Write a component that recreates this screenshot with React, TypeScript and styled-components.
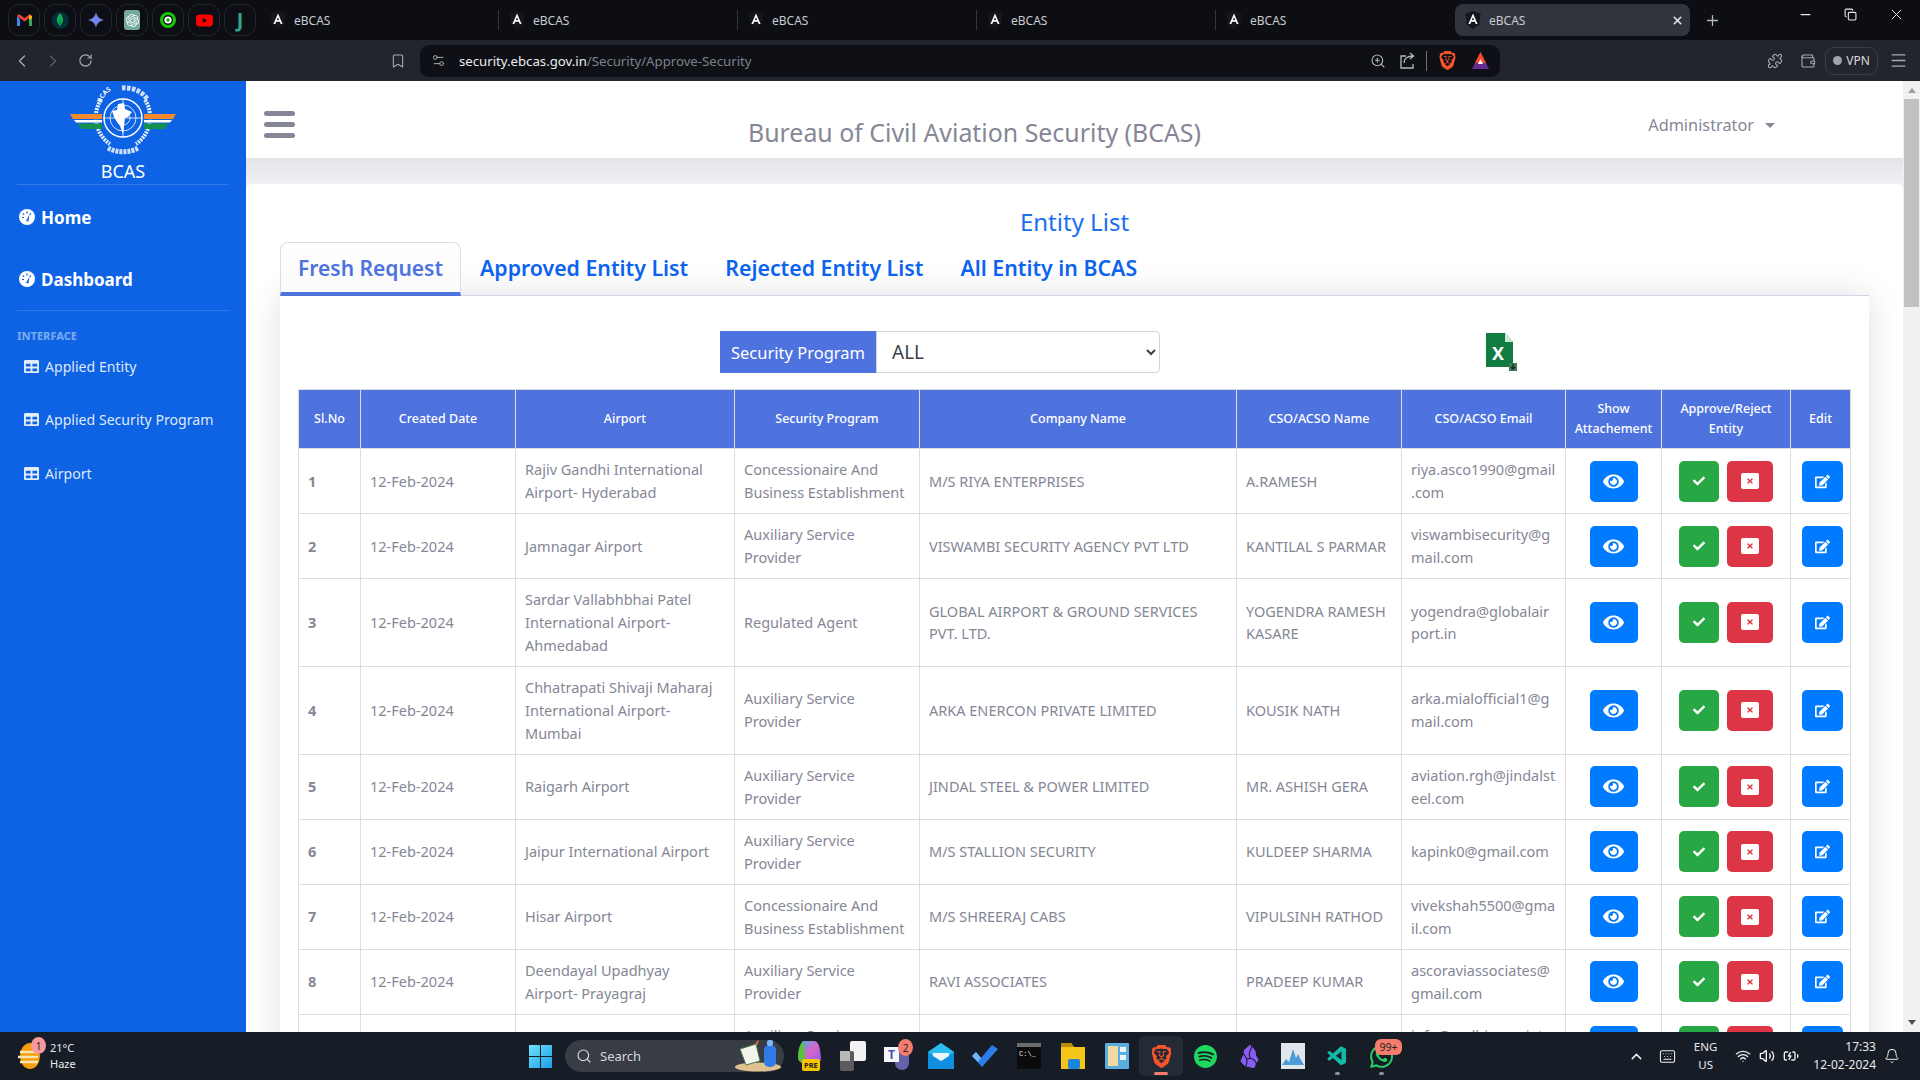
import React from 'react';
import styled, { createGlobalStyle } from 'styled-components';
import {
  ChevronLeft,
  ChevronRight,
  RotateCw,
  Bookmark,
  Settings2,
  ZoomIn,
  Puzzle,
  Wallet,
  Menu,
  Plus,
  X,
  Minus,
  Copy,
  Search,
  Wifi,
  Volume2,
  BatteryCharging,
  Bell,
  ChevronUp,
  Keyboard,
} from 'lucide-react';
import { FaTable, FaEye, FaCheck, FaTimes, FaEdit } from 'react-icons/fa';
import { SiBrave, SiSpotify, SiWhatsapp, SiObsidian, SiOpenai, SiYoutube, SiMongodb } from 'react-icons/si';
import { VscVscode } from 'react-icons/vsc';

interface EntityRow {
  id: number;
  airport: string;
  program: string;
  company: string;
  officer: string;
  email: string;
}

const rows: EntityRow[] = [
  { id: 1, airport: 'Rajiv Gandhi International Airport- Hyderabad', program: 'Concessionaire And Business Establishment', company: 'M/S RIYA ENTERPRISES', officer: 'A.RAMESH', email: 'riya.asco1990@gmail.com' },
  { id: 2, airport: 'Jamnagar Airport', program: 'Auxiliary Service Provider', company: 'VISWAMBI SECURITY AGENCY PVT LTD', officer: 'KANTILAL S PARMAR', email: 'viswambisecurity@gmail.com' },
  { id: 3, airport: 'Sardar Vallabhbhai Patel International Airport- Ahmedabad', program: 'Regulated Agent', company: 'GLOBAL AIRPORT & GROUND SERVICES PVT. LTD.', officer: 'YOGENDRA RAMESH KASARE', email: 'yogendra@globalairport.in' },
  { id: 4, airport: 'Chhatrapati Shivaji Maharaj International Airport- Mumbai', program: 'Auxiliary Service Provider', company: 'ARKA ENERCON PRIVATE LIMITED', officer: 'KOUSIK NATH', email: 'arka.mialofficial1@gmail.com' },
  { id: 5, airport: 'Raigarh Airport', program: 'Auxiliary Service Provider', company: 'JINDAL STEEL & POWER LIMITED', officer: 'MR. ASHISH GERA', email: 'aviation.rgh@jindalsteel.com' },
  { id: 6, airport: 'Jaipur International Airport', program: 'Auxiliary Service Provider', company: 'M/S STALLION SECURITY', officer: 'KULDEEP SHARMA', email: 'kapink0@gmail.com' },
  { id: 7, airport: 'Hisar Airport', program: 'Concessionaire And Business Establishment', company: 'M/S SHREERAJ CABS', officer: 'VIPULSINH RATHOD', email: 'vivekshah5500@gmail.com' },
  { id: 8, airport: 'Deendayal Upadhyay Airport- Prayagraj', program: 'Auxiliary Service Provider', company: 'RAVI ASSOCIATES', officer: 'PRADEEP KUMAR', email: 'ascoraviassociates@gmail.com' },
  { id: 9, airport: 'Tirupati Airport', program: 'Auxiliary Service Provider', company: 'SUDHI ASSOCIATES', officer: 'CH KRISHNA MOHAN', email: 'info@sudhiassociates.com' },
];

const columnWidths = [62, 155, 219, 185, 317, 165, 164, 96, 129, 60];
const tabTitles = [0, 1, 2, 3, 4];

const GlobalStyle = createGlobalStyle`
  html, body {
    margin: 0;
    padding: 0;
    height: 100%;
    overflow: hidden;
  }
  body {
    font-family: "Noto Sans", "Open Sans", sans-serif;
    background: #fff;
  }
  * {
    box-sizing: border-box;
  }
`;

export default function App() {
  return (
    <>
      <GlobalStyle />
      <Screen>
        <TabStrip>
          <PinnedRow>
            <Pinned><GmailMark /></Pinned>
            <Pinned>
              <MongoDisc><SiMongodb size={14} color="#13aa52" /></MongoDisc>
            </Pinned>
            <Pinned><GeminiMark /></Pinned>
            <Pinned>
              <GptTile><SiOpenai size={13} color="#fff" /></GptTile>
            </Pinned>
            <Pinned><RingMark /></Pinned>
            <Pinned><SiYoutube size={17} color="#ff0000" /></Pinned>
            <Pinned><LetterJ>J</LetterJ></Pinned>
          </PinnedRow>
          {tabTitles.map((t) => (
            <BrowserTab key={t} $last={t === 4}>
              <AngularMark />
              <TabLabel>eBCAS</TabLabel>
            </BrowserTab>
          ))}
          <ActiveTab>
            <AngularMark />
            <TabLabel>eBCAS</TabLabel>
            <TabClose><X size={13} strokeWidth={3} color="#e6e7ea" /></TabClose>
          </ActiveTab>
          <NewTab><Plus size={17} color="#b5b8c0" strokeWidth={1.8} /></NewTab>
          <WindowControls>
            <Minus size={15} color="#e8e8e8" />
            <Copy size={13} color="#e8e8e8" />
            <X size={17} color="#e8e8e8" strokeWidth={1.4} />
          </WindowControls>
        </TabStrip>

        <ToolBar>
          <NavGroup>
            <ChevronLeft size={20} color="#a8abb3" strokeWidth={1.6} />
            <ChevronRight size={20} color="#5b5e67" strokeWidth={1.6} />
            <ReloadSlot><RotateCw size={15} color="#a8abb3" strokeWidth={1.8} /></ReloadSlot>
          </NavGroup>
          <BookmarkSlot><Bookmark size={16} color="#a8abb3" strokeWidth={1.6} /></BookmarkSlot>
          <AddressPill>
            <Settings2 size={15} color="#a8abb3" strokeWidth={1.6} />
            <UrlText>
              <UrlHost>security.ebcas.gov.in</UrlHost>/Security/Approve-Security
            </UrlText>
            <PillTools>
              <ZoomIn size={16} color="#b5b8c0" strokeWidth={1.6} />
              <ShareMark />
              <PillDivider />
              <SiBrave size={19} color="#fb542b" />
              <RewardMark />
            </PillTools>
          </AddressPill>
          <ToolEnd>
            <Puzzle size={16} color="#a8abb3" strokeWidth={1.6} />
            <Wallet size={16} color="#a8abb3" strokeWidth={1.6} />
            <VpnPill><VpnDot />VPN</VpnPill>
            <Menu size={19} color="#a8abb3" strokeWidth={1.6} />
          </ToolEnd>
        </ToolBar>

        <PageBody>
          <Sidebar>
            <Brand>
              <BcasLogo />
              <BrandName>BCAS</BrandName>
            </Brand>
            <SideDivider />
            <PrimaryLink $first><GaugeMark />Home</PrimaryLink>
            <PrimaryLink><GaugeMark />Dashboard</PrimaryLink>
            <SideDivider />
            <SideHeading>INTERFACE</SideHeading>
            <SubLink><FaTable size={15} />Applied Entity</SubLink>
            <SubLink><FaTable size={15} />Applied Security Program</SubLink>
            <SubLink><FaTable size={15} />Airport</SubLink>
          </Sidebar>

          <Main>
            <TopBar>
              <Hamburger><span /><span /><span /></Hamburger>
              <SiteTitle>Bureau of Civil Aviation Security (BCAS)</SiteTitle>
              <UserMenu>Administrator<Caret /></UserMenu>
            </TopBar>
            <TopShade />
            <Content>
              <PageTitle>Entity List</PageTitle>
              <Tabs>
                <TabLink $active>Fresh Request</TabLink>
                <TabLink>Approved Entity List</TabLink>
                <TabLink>Rejected Entity List</TabLink>
                <TabLink>All Entity in BCAS</TabLink>
              </Tabs>
              <Card>
                <FilterRow>
                  <FilterLabel>Security Program</FilterLabel>
                  <FilterSelect defaultValue="ALL">
                    <option>ALL</option>
                  </FilterSelect>
                  <ExcelMark />
                </FilterRow>
                <Table>
                  <colgroup>
                    {columnWidths.map((w, i) => (
                      <col key={i} width={w} />
                    ))}
                  </colgroup>
                  <thead>
                    <tr>
                      <Th>Sl.No</Th>
                      <Th>Created Date</Th>
                      <Th>Airport</Th>
                      <Th>Security Program</Th>
                      <Th>Company Name</Th>
                      <Th>CSO/ACSO Name</Th>
                      <Th>CSO/ACSO Email</Th>
                      <Th>Show Attachement</Th>
                      <Th>Approve/Reject Entity</Th>
                      <Th>Edit</Th>
                    </tr>
                  </thead>
                  <tbody>
                    {rows.map((row) => (
                      <tr key={row.id}>
                        <NumberCell>{row.id}</NumberCell>
                        <Td>12-Feb-2024</Td>
                        <Td>{row.airport}</Td>
                        <Td>{row.program}</Td>
                        <Td>{row.company}</Td>
                        <Td>{row.officer}</Td>
                        <EmailCell>{row.email}</EmailCell>
                        <ActionCell>
                          <ActionButton $tone="#007bff" $width={48}><FaEye size={21} /></ActionButton>
                        </ActionCell>
                        <ActionCell>
                          <ActionPair>
                            <ActionButton $tone="#28a745" $width={40}><FaCheck size={12} /></ActionButton>
                            <ActionButton $tone="#dc3545" $width={46}>
                              <CloseBox><FaTimes size={8} /></CloseBox>
                            </ActionButton>
                          </ActionPair>
                        </ActionCell>
                        <EditCell>
                          <ActionButton $tone="#007bff" $width={41}><FaEdit size={15} /></ActionButton>
                        </EditCell>
                      </tr>
                    ))}
                  </tbody>
                </Table>
              </Card>
            </Content>
          </Main>

          <ScrollTrack>
            <ScrollArrow $up />
            <ScrollThumb />
            <ScrollArrow />
          </ScrollTrack>
        </PageBody>

        <TaskBar>
          <WeatherArea>
            <WeatherIcon>
              <SunGlyph />
              <NotifyDot>1</NotifyDot>
            </WeatherIcon>
            <WeatherText>
              <span>21°C</span>
              <span>Haze</span>
            </WeatherText>
          </WeatherArea>
          <TaskSlot><WindowsMark /></TaskSlot>
          <SearchPill>
            <Search size={16} color="#d5d7db" strokeWidth={1.8} />
            <SearchWord>Search</SearchWord>
            <SearchArt />
          </SearchPill>
          <TaskSlot><CopilotMark /></TaskSlot>
          <TaskSlot><StackMark /></TaskSlot>
          <TaskSlot>
            <TeamsMark />
            <CountBadge>2</CountBadge>
          </TaskSlot>
          <TaskSlot><MailMark /></TaskSlot>
          <TaskSlot><TodoMark /></TaskSlot>
          <TaskSlot><ConsoleTile>C:\_</ConsoleTile></TaskSlot>
          <TaskSlot><FolderMark /></TaskSlot>
          <TaskSlot><MonitorMark /></TaskSlot>
          <TaskSlot $active>
            <SiBrave size={23} color="#fb542b" />
            <ActiveBar />
          </TaskSlot>
          <TaskSlot><SiSpotify size={23} color="#1ed760" /></TaskSlot>
          <TaskSlot><SiObsidian size={23} color="#8a5cf6" /></TaskSlot>
          <TaskSlot><GraphTile /></TaskSlot>
          <TaskSlot>
            <VscVscode size={23} color="#13b8a6" />
            <RunDot />
          </TaskSlot>
          <TaskSlot>
            <SiWhatsapp size={23} color="#25d366" />
            <WideBadge>99+</WideBadge>
            <RunDot />
          </TaskSlot>
          <Tray>
            <ChevronUp size={17} color="#f0f0f0" />
            <Keyboard size={17} color="#f0f0f0" strokeWidth={1.5} />
            <LangBlock>
              <span>ENG</span>
              <span>US</span>
            </LangBlock>
            <TrayIcons>
              <Wifi size={16} color="#f0f0f0" />
              <Volume2 size={16} color="#f0f0f0" />
              <BatteryCharging size={16} color="#f0f0f0" />
            </TrayIcons>
            <ClockBlock>
              <span>17:33</span>
              <span>12-02-2024</span>
            </ClockBlock>
            <Bell size={16} color="#f0f0f0" strokeWidth={1.5} />
          </Tray>
        </TaskBar>
      </Screen>
    </>
  );
}

function AngularMark() {
  return (
    <svg width="16" height="18" viewBox="0 0 16 18">
      <path d="M8 0 15.5 2.6 14.4 13.4 8 18 1.6 13.4.5 2.6z" fill="#15171c" />
      <path d="M8 2.5 3.4 13h1.9l.9-2.3h3.6l.9 2.3h1.9L8 2.5zM6.9 9 8 6.3 9.1 9z" fill="#fff" />
    </svg>
  );
}

function GmailMark() {
  return (
    <svg width="15" height="12" viewBox="0 0 15 12">
      <path d="M0 2v10h3V5z" fill="#4285f4" />
      <path d="M12 5v7h3V2z" fill="#34a853" />
      <path d="M0 2 7.5 7.5 15 2 13 0 7.5 4 2 0z" fill="#ea4335" />
      <path d="M12 1.3 15 2v2l-3 2z" fill="#fbbc04" />
    </svg>
  );
}

function GeminiMark() {
  return (
    <svg width="16" height="16" viewBox="0 0 16 16">
      <defs>
        <linearGradient id="gem" x1="0" y1="0" x2="1" y2="1">
          <stop offset="0" stopColor="#5b8def" />
          <stop offset="1" stopColor="#8a7be0" />
        </linearGradient>
      </defs>
      <path d="M8 0c.7 4.3 3.5 7.2 8 8-4.5.8-7.3 3.7-8 8-.7-4.3-3.5-7.2-8-8 4.5-.8 7.3-3.7 8-8z" fill="url(#gem)" />
    </svg>
  );
}

function RingMark() {
  return (
    <svg width="16" height="16" viewBox="0 0 16 16">
      <circle cx="8" cy="8" r="8" fill="#16c60c" />
      <circle cx="8" cy="8" r="5" fill="#0b0d12" />
      <circle cx="8" cy="8" r="3.6" fill="#fff" />
      <circle cx="8" cy="8" r="1.8" fill="#16a80c" />
    </svg>
  );
}

function ShareMark() {
  return (
    <svg width="15" height="17" viewBox="0 0 15 17" fill="none" stroke="#b5b8c0" strokeWidth="1.3">
      <path d="M6 4H1v12h12v-4" />
      <path d="M4 11c0-4 3-7 9-7M10 1l3.5 3L10 7" />
    </svg>
  );
}

function RewardMark() {
  return (
    <svg width="19" height="19" viewBox="0 0 19 19">
      <path d="M9.5 1 18 18H1z" fill="#662d91" />
      <path d="M9.5 1 15 12H4z" fill="#ff4724" />
      <path d="M9.5 8 12 13H7z" fill="#fff" />
    </svg>
  );
}

function GaugeMark() {
  return (
    <svg width="16" height="16" viewBox="0 0 16 16">
      <circle cx="8" cy="8" r="8" fill="#fff" />
      <path d="M3 8.5h2M8 2.5v2M12 4.5l-1.3 1.3M3.8 4.5l1.3 1.3" stroke="#0d63e4" strokeWidth="1.2" />
      <path d="M7 12l3.500-6.500L9.500 12.500z" fill="#0d63e4" />
    </svg>
  );
}

function BcasLogo() {
  return (
    <LogoSvg viewBox="0 0 110 76" width="110" height="76">
      <defs>
        <path id="bcasArc" d="M33 19a26 26 0 0 1 14-15" />
      </defs>
      <text fontSize="6.5" fontWeight="700" fill="#fff" fontFamily="Noto Sans, sans-serif">
        <textPath href="#bcasArc">BCAS</textPath>
      </text>
      <path d="M54 4c10-1 20 3 26 12" fill="none" stroke="#fff" strokeWidth="5" strokeDasharray="3.5 1.5" opacity=".8" />
      <path d="M33 16c-9 13-6 34 9 44M77 16c9 13 6 34-9 44" fill="none" stroke="#fff" strokeWidth="4" strokeDasharray="2 1" opacity=".9" />
      <path d="M2 30h32v5H5z" fill="#f58a2e" />
      <path d="M6 36h28v2.5H8z" fill="#fff" />
      <path d="M9 39.5h25V45H14z" fill="#12924d" />
      <path d="M108 30H76v5h29z" fill="#f58a2e" />
      <path d="M104 36H76v2.5h26z" fill="#fff" />
      <path d="M101 39.5H76V45H96z" fill="#12924d" />
      <circle cx="55" cy="34" r="19" fill="#0d63e4" stroke="#fff" strokeWidth="1.5" />
      <circle cx="55" cy="34" r="13" fill="none" stroke="#fff" strokeWidth=".8" />
      <circle cx="55" cy="34" r="7" fill="none" stroke="#fff" strokeWidth=".8" />
      <path d="M36 34h38M55 15v38" stroke="#fff" strokeWidth=".8" />
      <path d="M50 20l6-1 1 6 7 3-4 5-3 1-2 16-3-8-6-9-2-6 5-1z" fill="#fff" />
      <path d="M40 64c8 5 22 5 30 0" fill="none" stroke="#fff" strokeWidth="5" strokeDasharray="3 1" opacity=".8" />
    </LogoSvg>
  );
}

function ExcelMark() {
  return (
    <ExcelSvg viewBox="0 0 33 38" width="33" height="38">
      <path d="M1 0h19l8 9v25H1z" fill="#107c41" />
      <path d="M20 0l8 9h-8z" fill="#cfe8d5" />
      <text x="7" y="27" fontSize="18" fontWeight="700" fill="#fff" fontFamily="Noto Sans, sans-serif">X</text>
      <path d="M24 30h8v8h-8z" fill="#3d7a55" />
      <path d="M28 31v5m-2-2l2 2 2-2" stroke="#1f2a30" strokeWidth="1.4" fill="none" />
    </ExcelSvg>
  );
}

function SunGlyph() {
  return (
    <svg width="24" height="28" viewBox="0 0 24 28">
      <ellipse cx="12" cy="14" rx="10" ry="13" fill="#f59e0b" />
      <path d="M2 10h18M0 15h20M2 20h18" stroke="#f8e5b0" strokeWidth="2.4" />
    </svg>
  );
}

function WindowsMark() {
  return (
    <svg width="23" height="23" viewBox="0 0 23 23">
      <defs>
        <linearGradient id="winA" x1="0" y1="0" x2="1" y2="1">
          <stop offset="0" stopColor="#6fe2fb" />
          <stop offset="1" stopColor="#1a9fe6" />
        </linearGradient>
      </defs>
      <path d="M0 0h11v11H0zM12 0h11v11H12zM0 12h11v11H0zM12 12h11v11H12z" fill="url(#winA)" />
    </svg>
  );
}

function SearchArt() {
  return (
    <SearchArtSvg width="50" height="32" viewBox="0 0 50 32">
      <ellipse cx="24" cy="27" rx="23" ry="4.5" fill="#e0c190" />
      <path d="M6 9l16-5 4 17-14 4z" fill="#f4f4ee" stroke="#3f7f4f" />
      <path d="M21 4l3-4 1 1-2 5z" fill="#d06a3a" />
      <rect x="30" y="5" width="12" height="22" rx="5" fill="#2f7be8" />
      <rect x="33" y="0" width="6" height="6" rx="2" fill="#7fb6f5" />
    </SearchArtSvg>
  );
}

function CopilotMark() {
  return (
    <svg width="26" height="32" viewBox="0 0 26 32">
      <defs>
        <linearGradient id="copA" x1="0" y1="0" x2="1" y2="1">
          <stop offset="0" stopColor="#2fb6e8" />
          <stop offset=".5" stopColor="#d667c6" />
          <stop offset="1" stopColor="#8b5cf6" />
        </linearGradient>
      </defs>
      <path d="M7 1h11c3 0 5 3 6 9l1 8c0 3-2 5-5 5H9C5 23 2 21 2 17z" fill="url(#copA)" />
      <path d="M2 17C2 9 4 4 7 1l3 22H8c-3 0-6-2-6-6z" fill="#57c23a" />
      <rect x="6" y="19" width="18" height="12" rx="2" fill="#f7c400" />
      <text x="8" y="28" fontSize="7.5" fontWeight="700" fill="#222" fontFamily="Noto Sans, sans-serif">PRE</text>
    </svg>
  );
}

function StackMark() {
  return (
    <svg width="26" height="30" viewBox="0 0 26 30">
      <rect x="10" y="0" width="16" height="20" rx="2" fill="#f2f2f2" />
      <rect x="0" y="10" width="14" height="20" rx="2" fill="#5c5c5c" />
      <rect x="0" y="10" width="10" height="10" fill="#b8b8b8" />
    </svg>
  );
}

function TeamsMark() {
  return (
    <svg width="26" height="28" viewBox="0 0 26 28">
      <path d="M8 6h14a3 3 0 0 1 3 3v12a7 7 0 0 1-14 0z" fill="#6264a7" />
      <rect x="0" y="5" width="15" height="15" fill="#f7f7fb" />
      <text x="4" y="17" fontSize="12" fontWeight="700" fill="#464eb8" fontFamily="Noto Sans, sans-serif">T</text>
    </svg>
  );
}

function MailMark() {
  return (
    <svg width="26" height="26" viewBox="0 0 26 26">
      <path d="M13 0 26 9v17H0V9z" fill="#0f8fe0" />
      <path d="M0 9 13 18 26 9 13 0z" fill="#2bbdf2" />
      <path d="M5 10h16v3l-8 5-8-5z" fill="#eaf7fd" />
    </svg>
  );
}

function TodoMark() {
  return (
    <svg width="26" height="22" viewBox="0 0 26 22">
      <path d="M0 11l4-4 5 6L20 0l6 4L10 22z" fill="#2b7de9" />
      <path d="M0 11l4-4 5 6-3 4z" fill="#70b8f5" />
    </svg>
  );
}

function FolderMark() {
  return (
    <svg width="26" height="26" viewBox="0 0 26 26">
      <path d="M1 0h10l3 4h11v22H1z" fill="#f5c518" />
      <path d="M1 0h10l3 4H1z" fill="#b88a10" />
      <rect x="8" y="16" width="12" height="10" rx="2" fill="#1b86d9" />
    </svg>
  );
}

function MonitorMark() {
  return (
    <svg width="24" height="26" viewBox="0 0 24 26">
      <rect width="24" height="26" rx="1" fill="#5aaee0" />
      <rect x="3" y="3" width="10" height="20" fill="#f2d9a2" />
      <path d="M15 4h6v5h-6zM15 12h6v5h-6z" fill="#eaf5fb" />
    </svg>
  );
}

function GraphTile() {
  return (
    <svg width="24" height="26" viewBox="0 0 24 26">
      <rect width="24" height="26" fill="#dfe6ec" />
      <path d="M1 22l4-6 3 3 4-13 3 9 2-4 3 6 3 5z" fill="#4a9bd8" />
    </svg>
  );
}

const Screen = styled.div`
  width: 1920px;
  height: 1080px;
  display: flex;
  flex-direction: column;
  overflow: hidden;
`;

const TabStrip = styled.div`
  height: 40px;
  flex: none;
  display: flex;
  align-items: center;
  background: #0c0e13;
`;

const PinnedRow = styled.div`
  display: flex;
  gap: 4px;
  padding-left: 8px;
  width: 260px;
  flex: none;
`;

const Pinned = styled.div`
  width: 32px;
  height: 32px;
  flex: none;
  display: flex;
  align-items: center;
  justify-content: center;
  border: 1px solid #23262d;
  border-radius: 11px;
`;

const MongoDisc = styled.div`
  width: 17px;
  height: 17px;
  border-radius: 50%;
  background: #062f3a;
  display: flex;
  align-items: center;
  justify-content: center;
`;

const GptTile = styled.div`
  width: 16px;
  height: 20px;
  border-radius: 3px;
  background: #74aa9c;
  display: flex;
  align-items: center;
  justify-content: center;
`;

const LetterJ = styled.span`
  font-size: 20px;
  font-weight: 700;
  line-height: 1;
  color: #2fa58e;
`;

const BrowserTab = styled.div<{ $last?: boolean }>`
  width: 239px;
  height: 20px;
  flex: none;
  display: flex;
  align-items: center;
  gap: 8px;
  padding-left: 10px;
  border-right: 1px solid ${(p) => (p.$last ? 'transparent' : '#33363e')};
`;

const TabLabel = styled.span`
  font-size: 12px;
  color: #c9cbd0;
`;

const ActiveTab = styled.div`
  width: 235px;
  height: 32px;
  flex: none;
  display: flex;
  align-items: center;
  gap: 8px;
  padding: 0 6px 0 10px;
  background: #31343d;
  border-radius: 8px;
`;

const TabClose = styled.span`
  margin-left: auto;
  display: flex;
`;

const NewTab = styled.span`
  display: flex;
  margin-left: 14px;
`;

const WindowControls = styled.div`
  margin-left: auto;
  display: flex;
  align-items: center;
  gap: 31px;
  padding: 0 15px 12px 0;
`;

const ToolBar = styled.div`
  height: 41px;
  flex: none;
  display: flex;
  align-items: center;
  background: #22252d;
`;

const NavGroup = styled.div`
  width: 390px;
  flex: none;
  display: flex;
  align-items: center;
  gap: 11px;
  padding-left: 12px;
`;

const ReloadSlot = styled.span`
  display: flex;
  margin-left: 4px;
`;

const BookmarkSlot = styled.span`
  display: flex;
  width: 30px;
  flex: none;
`;

const AddressPill = styled.div`
  width: 1080px;
  height: 32px;
  flex: none;
  display: flex;
  align-items: center;
  padding: 0 10px 0 11px;
  background: #0e1015;
  border-radius: 9px;
`;

const UrlText = styled.span`
  margin-left: 13px;
  font-size: 13.2px;
  color: #7e828b;
`;

const UrlHost = styled.span`
  color: #eceef1;
`;

const PillTools = styled.div`
  margin-left: auto;
  display: flex;
  align-items: center;
  gap: 14px;
`;

const PillDivider = styled.span`
  width: 1px;
  height: 20px;
  margin: 0 -3px;
  background: #70737c;
`;

const ToolEnd = styled.div`
  flex: 1;
  display: flex;
  align-items: center;
  padding-left: 267px;
  gap: 17px;
`;

const VpnPill = styled.div`
  width: 53px;
  height: 28px;
  margin-left: -8px;
  margin-right: -6px;
  display: flex;
  align-items: center;
  justify-content: center;
  gap: 4px;
  border: 1px solid #3a3d46;
  border-radius: 9px;
  font-size: 12px;
  color: #d8dade;
`;

const VpnDot = styled.span`
  width: 9px;
  height: 9px;
  border-radius: 50%;
  background: #9ea2ad;
`;

const PageBody = styled.div`
  flex: 1;
  min-height: 0;
  display: flex;
  overflow: hidden;
`;

const Sidebar = styled.nav`
  width: 246px;
  flex: none;
  display: flex;
  flex-direction: column;
  padding: 0 17px;
  background: #0d63e4;
  color: #fff;
`;

const Brand = styled.div`
  display: flex;
  flex-direction: column;
  align-items: center;
  height: 103px;
`;

const LogoSvg = styled.svg`
  flex: none;
  margin-top: 3px;
`;

const BrandName = styled.div`
  font-size: 18px;
  line-height: 22px;
`;

const SideDivider = styled.hr`
  width: 100%;
  margin: 0;
  border: 0;
  border-top: 1px solid rgba(255, 255, 255, 0.15);
`;

const PrimaryLink = styled.a<{ $first?: boolean }>`
  display: flex;
  align-items: center;
  gap: 6px;
  height: 62px;
  margin-top: ${(p) => (p.$first ? '1px' : '0')};
  padding-left: 2px;
  font-size: 17px;
  font-weight: 700;
  color: #fff;
`;

const SideHeading = styled.div`
  margin-top: 18px;
  margin-bottom: 7px;
  font-size: 11px;
  font-weight: 800;
  line-height: 14px;
  color: rgba(255, 255, 255, 0.45);
`;

const SubLink = styled.a`
  display: flex;
  align-items: center;
  gap: 6px;
  height: 32px;
  margin-bottom: 21.5px;
  padding-left: 7px;
  font-size: 14.1px;
  color: rgba(255, 255, 255, 0.88);
`;

const Main = styled.main`
  flex: 1;
  min-width: 0;
  display: flex;
  flex-direction: column;
  overflow: hidden;
  background: #eef0f3;
`;

const TopBar = styled.header`
  height: 77px;
  flex: none;
  display: flex;
  align-items: center;
  padding: 0 128px 0 18px;
  background: #fff;
`;

const Hamburger = styled.div`
  width: 31px;
  flex: none;
  display: flex;
  flex-direction: column;
  gap: 6px;
  margin-top: 9px;

  span {
    display: block;
    height: 5px;
    border-radius: 3px;
    background: #858796;
  }
`;

const SiteTitle = styled.div`
  margin-left: 453px;
  padding-top: 24px;
  font-size: 24.9px;
  color: #858796;
`;

const UserMenu = styled.div`
  margin-left: auto;
  padding-top: 11px;
  display: flex;
  align-items: center;
  gap: 11px;
  font-size: 16.3px;
  color: #858796;
`;

const Caret = styled.span`
  width: 0;
  height: 0;
  border-left: 5px solid transparent;
  border-right: 5px solid transparent;
  border-top: 5px solid #858796;
`;

const TopShade = styled.div`
  height: 26px;
  flex: none;
  background: linear-gradient(#e2e4e9, #f0f1f4);
`;

const Content = styled.section`
  flex: 1;
  min-height: 0;
  padding: 0 34px;
  background: #fff;
  border-radius: 6px 6px 0 0;
  overflow: hidden;
`;

const PageTitle = styled.h1`
  margin: 0;
  height: 58px;
  padding-top: 17px;
  display: flex;
  align-items: center;
  justify-content: center;
  font-size: 24px;
  font-weight: 400;
  color: #1a6ff0;
`;

const Tabs = styled.div`
  position: relative;
  z-index: 1;
  height: 54px;
  display: flex;
  border-bottom: 1px solid #d4d4e6;
`;

const TabLink = styled.a<{ $active?: boolean }>`
  height: ${(p) => (p.$active ? '54px' : '53px')};
  display: flex;
  align-items: center;
  padding: ${(p) => (p.$active ? '0 17px' : '0 18px 3px')};
  margin-right: ${(p) => (p.$active ? '0' : '-1px')};
  font-size: ${(p) => (p.$active ? '21px' : '21.3px')};
  font-weight: 600;
  color: ${(p) => (p.$active ? '#4e73df' : '#0b63ef')};
  background: ${(p) => (p.$active ? 'linear-gradient(#fff, #fafafa)' : 'transparent')};
  border: 1px solid ${(p) => (p.$active ? '#dddde8' : 'transparent')};
  border-bottom: ${(p) => (p.$active ? '4px solid #4e73df' : 'none')};
  border-radius: 8px 8px 0 0;
`;

const Card = styled.div`
  padding: 35px 18px 0;
  background: #fff;
  box-shadow: 0 0 32px rgba(0, 0, 0, 0.13);
`;

const FilterRow = styled.div`
  height: 42px;
  margin-bottom: 16px;
  padding-left: 422px;
  display: flex;
  align-items: stretch;
`;

const FilterLabel = styled.div`
  width: 156px;
  flex: none;
  display: flex;
  align-items: center;
  justify-content: center;
  font-size: 16.5px;
  color: #fff;
  background: #4e73df;
`;

const FilterSelect = styled.select`
  width: 284px;
  flex: none;
  padding: 0 11px;
  font-family: inherit;
  font-size: 19px;
  color: #3d3f4a;
  background: #fff;
  border: 1px solid #d1d3e2;
  border-radius: 0 4px 4px 0;
`;

const ExcelSvg = styled.svg`
  flex: none;
  margin: 2px 0 0 325px;
`;

const Table = styled.table`
  width: 1552px;
  table-layout: fixed;
  border-collapse: collapse;
`;

const Th = styled.th`
  height: 59px;
  padding: 4px 6px;
  font-size: 12.5px;
  font-weight: 500;
  line-height: 20px;
  color: #fff;
  background: #4e73df;
  border: 1px solid #dddddd;
`;

const Td = styled.td`
  padding: 9.25px 9px;
  font-size: 14.5px;
  line-height: 22.75px;
  color: #858796;
  border: 1px solid #dddddd;
  vertical-align: middle;
`;

const NumberCell = styled(Td)`
  font-weight: 700;
`;

const EmailCell = styled(Td)`
  padding-right: 8px;
  overflow-wrap: anywhere;
`;

const ActionCell = styled(Td)`
  text-align: center;
  padding: 9px 0;
`;

const EditCell = styled(ActionCell)`
  padding-left: 4px;
`;

const ActionPair = styled.div`
  display: flex;
  justify-content: center;
  gap: 8px;
`;

const ActionButton = styled.button<{ $tone: string; $width: number }>`
  width: ${(p) => p.$width}px;
  height: 41px;
  padding: 0;
  display: inline-flex;
  align-items: center;
  justify-content: center;
  color: #fff;
  background: ${(p) => p.$tone};
  border: 0;
  border-radius: 5px;
`;

const CloseBox = styled.span`
  width: 18px;
  height: 16px;
  display: flex;
  align-items: center;
  justify-content: center;
  color: #dc3545;
  background: #fff;
  border-radius: 2px;
`;

const ScrollTrack = styled.div`
  width: 17px;
  flex: none;
  display: flex;
  flex-direction: column;
  align-items: center;
  background: #f1f1f1;
`;

const ScrollThumb = styled.div`
  width: 15px;
  height: 208px;
  margin-top: 6px;
  margin-bottom: auto;
  background: #c1c1c1;
`;

const ScrollArrow = styled.span<{ $up?: boolean }>`
  width: 0;
  height: 0;
  margin: ${(p) => (p.$up ? '7px 0 0' : '0 0 7px')};
  border-left: 4px solid transparent;
  border-right: 4px solid transparent;
  border-${(p) => (p.$up ? 'bottom' : 'top')}: 5px solid ${(p) => (p.$up ? '#a0a0a0' : '#505050')};
`;

const TaskBar = styled.footer`
  height: 48px;
  flex: none;
  display: flex;
  align-items: center;
  background: #171d26;
`;

const WeatherArea = styled.div`
  width: 518px;
  flex: none;
  display: flex;
  align-items: center;
  gap: 8px;
  padding-left: 18px;
`;

const WeatherIcon = styled.div`
  position: relative;
  display: flex;
`;

const NotifyDot = styled.span`
  position: absolute;
  top: -5px;
  right: -4px;
  width: 15px;
  height: 17px;
  display: flex;
  align-items: center;
  justify-content: center;
  border-radius: 50%;
  font-size: 10px;
  color: #222;
  background: #f79aa0;
`;

const WeatherText = styled.div`
  display: flex;
  flex-direction: column;
  font-size: 11px;
  line-height: 16px;
  color: #e8e9eb;
`;

const TaskSlot = styled.div<{ $active?: boolean }>`
  position: relative;
  width: 44px;
  height: 40px;
  flex: none;
  display: flex;
  align-items: center;
  justify-content: center;
  background: ${(p) => (p.$active ? '#252b34' : 'transparent')};
  border-radius: 5px;
`;

const SearchPill = styled.div`
  width: 219px;
  height: 32px;
  flex: none;
  margin: 0 3px 0 3px;
  display: flex;
  align-items: center;
  gap: 8px;
  padding-left: 11px;
  background: #383c44;
  border-radius: 16px;
`;

const SearchWord = styled.span`
  font-size: 13px;
  color: #d5d7db;
`;

const SearchArtSvg = styled.svg`
  margin-left: auto;
`;

const CountBadge = styled.span`
  position: absolute;
  top: 3px;
  right: 6px;
  width: 15px;
  height: 17px;
  display: flex;
  align-items: center;
  justify-content: center;
  border-radius: 50%;
  font-size: 10px;
  color: #222;
  background: #f47c6c;
`;

const WideBadge = styled.span`
  position: absolute;
  top: 3px;
  left: 16px;
  width: 27px;
  height: 16px;
  display: flex;
  align-items: center;
  justify-content: center;
  border-radius: 6px;
  font-size: 10.5px;
  color: #222;
  background: #f47c6c;
`;

const ConsoleTile = styled.div`
  width: 24px;
  height: 26px;
  padding: 3px 0 0 2px;
  font-size: 7px;
  font-family: "Liberation Mono", monospace;
  color: #e8e8e8;
  background: #0b0b0b;
  border-top: 4px solid #6c6c6c;
  line-height: 8px;
`;

const ActiveBar = styled.span`
  position: absolute;
  bottom: 1px;
  left: 15px;
  width: 14px;
  height: 3px;
  border-radius: 2px;
  background: #f47c6c;
`;

const RunDot = styled.span`
  position: absolute;
  bottom: 1px;
  left: 20px;
  width: 5px;
  height: 3px;
  border-radius: 2px;
  background: #8a8f98;
`;

const Tray = styled.div`
  margin-left: auto;
  display: flex;
  align-items: center;
  gap: 14px;
  padding-right: 20px;
`;

const LangBlock = styled.div`
  display: flex;
  flex-direction: column;
  align-items: center;
  font-size: 11.5px;
  line-height: 18px;
  color: #e8e9eb;
  margin: 0 4px;
`;

const TrayIcons = styled.div`
  display: flex;
  align-items: center;
  gap: 8px;
`;

const ClockBlock = styled.div`
  display: flex;
  flex-direction: column;
  align-items: flex-end;
  margin-right: -6px;
  font-size: 12px;
  line-height: 18px;
  color: #e8e9eb;
`;
